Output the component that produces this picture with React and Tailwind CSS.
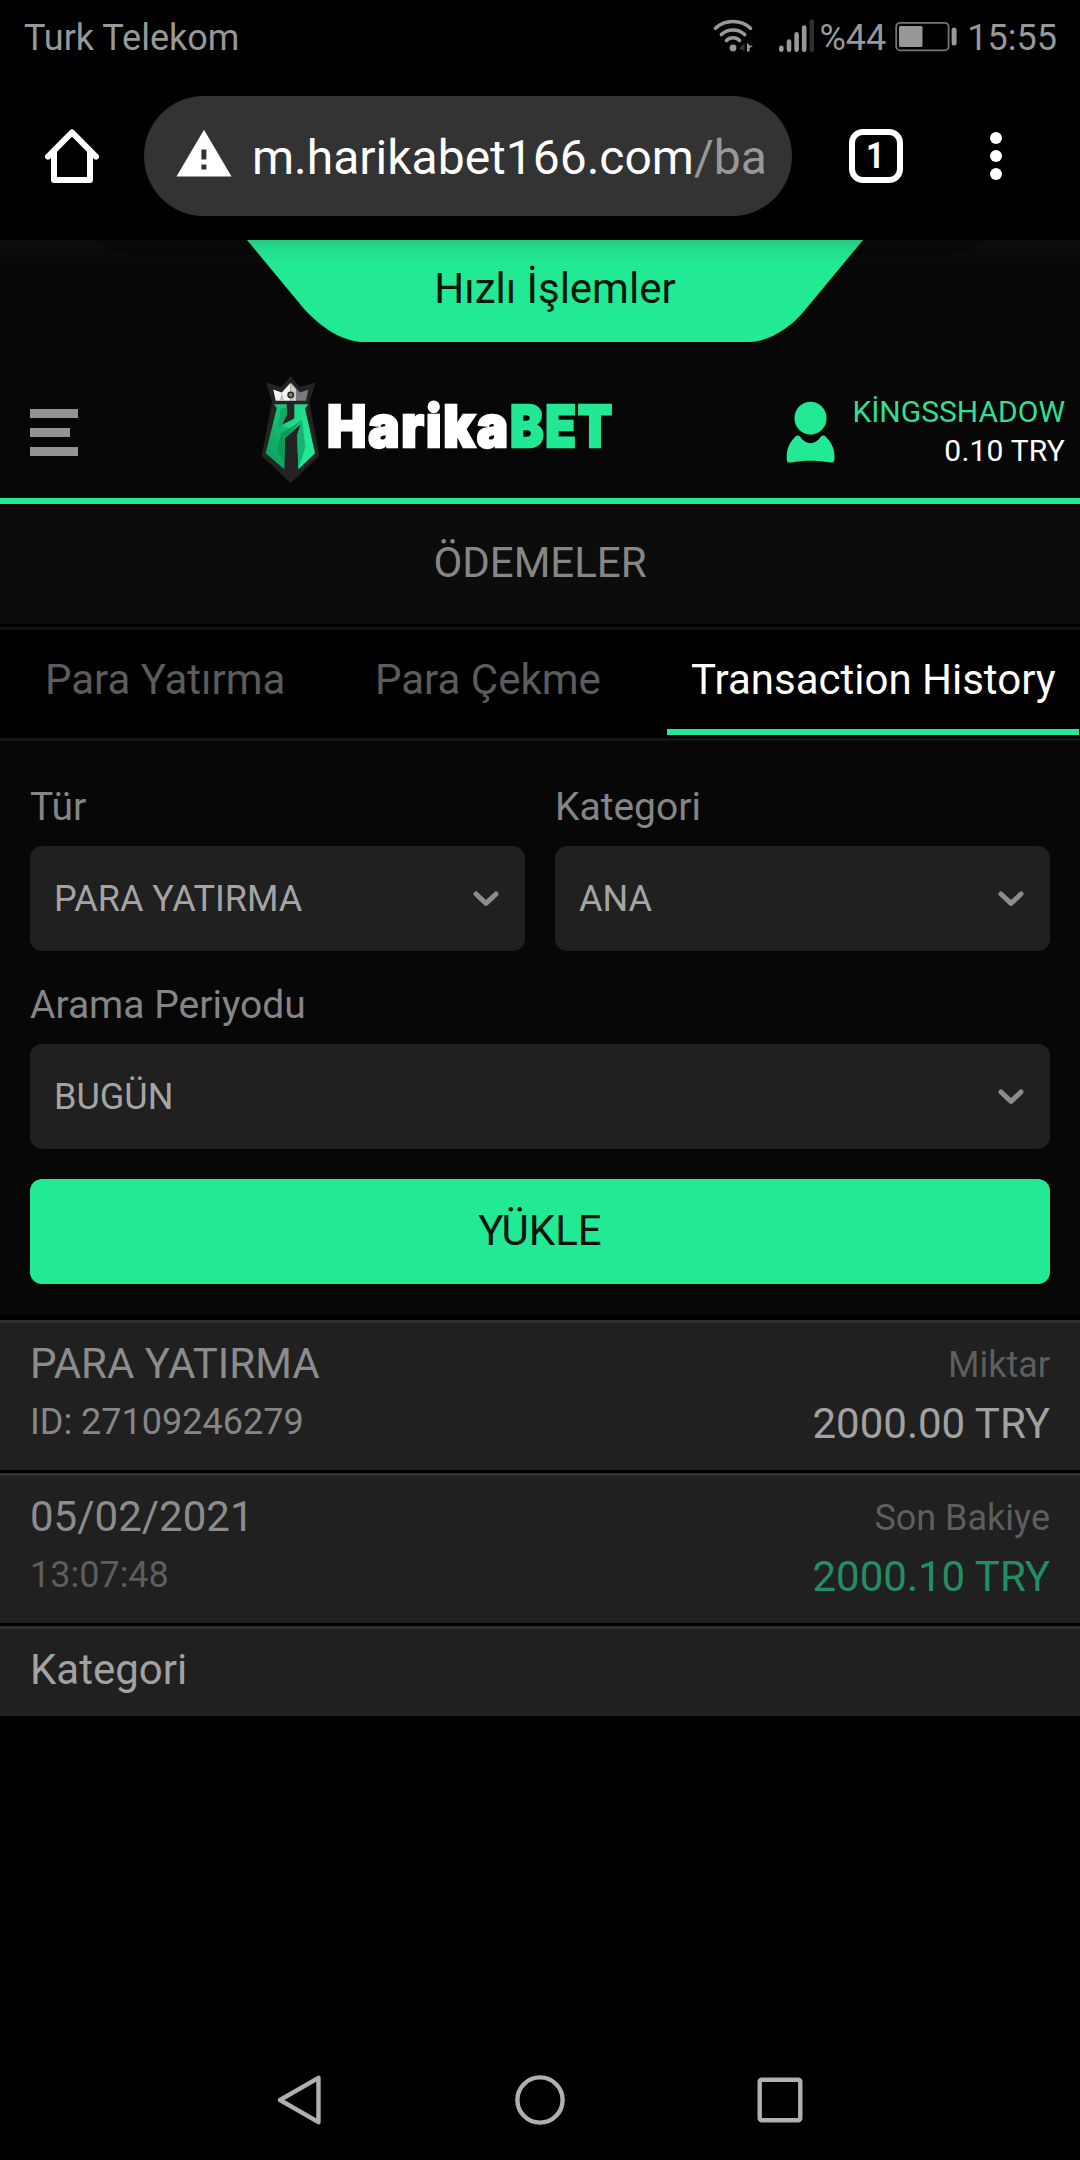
const selectChevron = (
  <svg className="h-[16px] w-[26px]" viewBox="0 0 26 16" fill="none" stroke="#8c8c8c" strokeWidth="5" strokeLinecap="round" strokeLinejoin="round">
    <path d="M3 3 L13 12.4 L23 3" />
  </svg>
);

function StatusBar() {
  return (
    <div className="flex h-[72px] items-start justify-between pl-[24px] pr-[23px] text-[36px] leading-[42px] text-[#989898]">
      <span className="mt-[17px] whitespace-nowrap">Turk Telekom</span>
      <div className="mt-[17px] flex items-start">
        <svg className="h-[36px] w-[42px]" viewBox="0 0 42 36" fill="none" stroke="#989898" strokeWidth="3.6" strokeLinecap="round">
          <path d="M3.5 11.2 C13 2.2 29 2.2 38.5 11.2" />
          <path d="M9.4 17.6 C15.5 11.4 26.5 11.4 32.6 17.6" />
          <path d="M14.5 23.4 C18 19.8 24 19.8 27.5 23.4" />
          <circle cx="21" cy="31" r="3.4" fill="#989898" stroke="none" />
          <path d="M32.5 26 L27 31.500 L32.500 34Z" fill="#333" stroke="none" />
          <path d="M35 25.5 V35 L37.6 34 V31 L41 29 L37.6 28.5Z" fill="#989898" stroke="none" />
        </svg>
        <svg className="ml-[24px] h-[36px] w-[38px]" viewBox="0 0 38 36" strokeWidth="4.6" strokeLinecap="round" fill="none" stroke="#989898">
          <path d="M3.3 30.8 V32.8 M11 24.6 V32.8 M18.6 17.4 V32.8 M26.2 10.6 V32.8" />
          <path d="M33.8 4.6 V32.8" stroke="#2e2e2e" />
        </svg>
        <span className="ml-[4px] whitespace-nowrap">%44</span>
        <svg className="ml-[9px] h-[36px] w-[62px]" viewBox="0 0 62 36" fill="none">
          <rect x="1.2" y="5.8" width="52.4" height="27.6" rx="4" stroke="#767676" strokeWidth="1.8" />
          <rect x="4" y="9" width="23.5" height="21" rx="1.5" fill="#989898" />
          <rect x="56.6" y="10.500" width="5" height="18" rx="2.5" fill="#989898" />
        </svg>
        <span className="ml-[10px] whitespace-nowrap">15:55</span>
      </div>
    </div>
  );
}

function BrowserBar() {
  return (
    <div className="flex h-[168px] items-center pl-[42px]">
      <svg className="h-[60px] w-[60px]" viewBox="0 0 60 60" fill="none" stroke="#fff" strokeWidth="6" strokeLinecap="round" strokeLinejoin="round">
        <path d="M6 30.6 L30 6.4 L54 30.6" />
        <path d="M12 26 V54 H48 V26" />
      </svg>
      <div className="ml-[42px] flex h-[120px] w-[648px] items-center rounded-full bg-[#333333] pl-[32px]">
        <svg className="mb-[6px] h-[48px] w-[56px] shrink-0" viewBox="0 0 56 48">
          <path d="M28 0.8 L55.5 47.5 H0.5Z" fill="#fff" />
          <path d="M25.4 20.5 h5 v10 h-5z M25.4 35.5 h5 v5 h-5z" fill="#333" />
        </svg>
        <span className="mt-[3px] ml-[20px] whitespace-nowrap text-[48px] leading-[56px] text-white">
          m.harikabet166.com<span className="text-[#989898]">/ba</span>
        </span>
      </div>
      <div className="ml-[57px] flex h-[54px] w-[54px] items-center justify-center rounded-[14px] border-[6px] border-white pr-[1px] text-[36px] leading-[40px] font-bold text-white">
        <span className="scale-x-90">1</span>
      </div>
      <svg className="ml-[81px] h-[54px] w-[24px]" viewBox="0 0 24 54" fill="#fff">
        <circle cx="12" cy="9" r="6" />
        <circle cx="12" cy="27" r="6" />
        <circle cx="12" cy="45" r="6" />
      </svg>
    </div>
  );
}

function QuickActions() {
  return (
    <div className="relative flex h-[102px] justify-center">
      <svg className="absolute inset-0 h-[102px] w-[1080px]" viewBox="0 0 1080 102">
        <defs>
          <linearGradient id="topShade" x1="0" y1="0" x2="0" y2="1">
            <stop offset="0" stopColor="#222" stopOpacity="0.24" />
            <stop offset="1" stopColor="#222" stopOpacity="0" />
          </linearGradient>
          <linearGradient id="tabFill" x1="0" y1="0" x2="0" y2="1">
            <stop offset="0" stopColor="#24cb83" />
            <stop offset="0.1" stopColor="#23de8d" />
            <stop offset="0.25" stopColor="#22e994" />
          </linearGradient>
        </defs>
        <path d="M95 0 C110 10 125 15 145 15 H935 C955 15 970 10 985 0Z" fill="#020202" />
        <rect width="1080" height="28" fill="url(#topShade)" />
        <path d="M247 0 H863 L805 70 C790 88 770 101 750 102 H362 C342 101 322 88 305 70Z" fill="url(#tabFill)" />
      </svg>
      <span className="relative mt-[24px] ml-[30px] text-[42px] leading-[50px] text-[#04150c]">Hızlı İşlemler</span>
    </div>
  );
}

function Logo() {
  return (
    <svg className="h-[108px] w-[360px] overflow-visible" viewBox="260 376 360 108">
      <defs>
        <linearGradient id="leftStem" x1="1" y1="0" x2="0.2" y2="1">
          <stop offset="0" stopColor="#20d588" />
          <stop offset="1" stopColor="#0ba05c" />
        </linearGradient>
        <linearGradient id="rightStem" x1="0" y1="0" x2="1" y2="1">
          <stop offset="0" stopColor="#1cc97e" />
          <stop offset="0.6" stopColor="#22e893" />
        </linearGradient>
      </defs>
      <path d="M290.700 376 L299.500 387 L315.700 382.500 L309.500 402 L319.300 456 L290.700 483 L261.700 456 L272 402 L266 382.500 L281.500 387Z" fill="#232323" />
      <path d="M273.300 389.500 L281.700 392.500 L290.700 382.700 V400.700 H275.700Z" fill="#f2f2f2" />
      <path d="M290.700 382.700 L300 392.500 L308.300 389.500 L306 400.700 H290.700Z" fill="#7a7a7a" />
      <path d="M290.700 382.700 L296 389 V400.700 H290.700Z" fill="#c9c9c9" />
      <path d="M281.700 392.500 L284 400.700 H280Z" fill="#bcbcbc" />
      <circle cx="290.700" cy="394.900" r="2.700" fill="#6f9442" stroke="#252525" strokeWidth="1.500" />
      <path d="M274 404.300 H286.700 V415 L281.700 425 L294.500 419.500 L304 411 L301 424 L285 438 L284.300 469.300 L265.700 453.300 L276.700 408.300Z" fill="url(#leftStem)" />
      <path d="M294.300 404.300 H308.300 L305 408.300 L315 453.300 L298.300 469.300 L297.300 435 L302 420 L290 428 L281.700 425 L294.300 418.500Z" fill="url(#rightStem)" />
      <path d="M281 408 H286.700 V415 L281.700 425 L278 429Z" fill="#0fab65" />
      <path d="M302 420 L285 438 L284.300 462 L277 452 L281 433 L290 428Z" fill="#0b9653" opacity="0.8" />
      <path d="M302 420 L305.500 447 L298.300 469.300 L297.300 435Z" fill="#15b571" />
      <text x="327" y="446.500" fontFamily="Inter, sans-serif" fontWeight="900" fontSize="58" letterSpacing="2" fill="#fff" stroke="#fff" strokeWidth="2.400" textLength="183" lengthAdjust="spacingAndGlyphs">Harika</text>
      <text x="510" y="446.500" fontFamily="Inter, sans-serif" fontWeight="900" fontSize="58" letterSpacing="2" fill="#22e893" stroke="#22e893" strokeWidth="2.400" textLength="104" lengthAdjust="spacingAndGlyphs">BET</text>
    </svg>
  );
}

function Header() {
  return (
    <header className="flex h-[162px] items-start border-b-[6px] border-[#22e994]">
      <div className="mt-[67px] ml-[30px] flex w-[48px] flex-col gap-[10px]">
        <span className="h-[9px] w-[48px] bg-[#939393]" />
        <span className="h-[9px] w-[40px] bg-[#939393]" />
        <span className="h-[9px] w-[48px] bg-[#939393]" />
      </div>
      <div className="mt-[34px] ml-[182px]">
        <Logo />
      </div>
      <svg className="mt-[58px] ml-[166px] h-[64px] w-[50px]" viewBox="0 0 50 64" fill="#22e994">
        <ellipse cx="24.500" cy="18.200" rx="16" ry="16.500" />
        <path d="M9 37 Q11.500 34.500 14 36.500 C20 45.500 29 45.500 35 36.500 Q37.500 34.500 40 37 C47 44 49 51 48.500 60 Q48 63 44.500 62.500 C30 60 19 60 4.500 62.500 Q1 63 0.800 60 C0.300 51 2 44 9 37Z" />
      </svg>
      <div className="mt-[52px] mr-[15px] ml-auto flex flex-col items-end gap-[3px] text-[30px] leading-[36px]">
        <span className="text-[#33dd94]">KİNGSSHADOW</span>
        <span className="tracking-[0.2px] text-white">0.10 TRY</span>
      </div>
    </header>
  );
}

function Tabs() {
  return (
    <nav className="flex h-[111px] border-b-[3px] border-[#151515] bg-black text-[42px] leading-[50px] text-[#5c5c5c]">
      <span className="w-[329px] pt-[25px] pl-[45px] whitespace-nowrap">Para Yatırma</span>
      <span className="w-[338px] pt-[25px] pl-[46px] whitespace-nowrap">Para Çekme</span>
      <span className="mb-[3px] w-[412px] border-b-[6px] border-[#22e994] pt-[25px] pl-[24px] whitespace-nowrap text-white">Transaction History</span>
    </nav>
  );
}

function Field({ label, value }) {
  return (
    <div className="flex flex-1 flex-col gap-[16px]">
      <span className="text-[39px] leading-[46px] text-[#858585]">{label}</span>
      <div className="flex h-[105px] items-center justify-between rounded-[12px] bg-[#202020] pr-[26px] pl-[24px] text-[36px] leading-[42px] text-[#a4a4a4]">
        <span>{value}</span>
        {selectChevron}
      </div>
    </div>
  );
}

function Filters() {
  return (
    <section className="flex h-[573px] flex-col px-[30px] pt-[43px]">
      <div className="flex gap-[30px]">
        <Field label="Tür" value="PARA YATIRMA" />
        <Field label="Kategori" value="ANA" />
      </div>
      <div className="mt-[31px] flex">
        <Field label="Arama Periyodu" value="BUGÜN" />
      </div>
      <button className="mt-[30px] h-[105px] rounded-[12px] bg-[#22e994] pb-[2px] text-[42px] leading-[50px] text-[#04150c]">YÜKLE</button>
    </section>
  );
}

function Row({ title, detail, detailClass, label, amount, amountClass }) {
  return (
    <div className="flex h-[150px] justify-between border-t-[3px] border-[#2f2f2f] bg-[#202020] px-[30px]">
      <div className="flex flex-col gap-[12px] pt-[16px]">
        <span className="text-[42px] leading-[50px] text-[#8c8c8c]">{title}</span>
        <span className={"text-[36px] leading-[42px] " + detailClass}>{detail}</span>
      </div>
      <div className="flex flex-col items-end gap-[13px] pt-[21px]">
        <span className="text-[36px] leading-[42px] text-[#5e5e5e]">{label}</span>
        <span className={"text-[42px] leading-[50px] " + amountClass}>{amount}</span>
      </div>
    </div>
  );
}

function NavBar() {
  return (
    <div className="flex h-[120px] items-center justify-center gap-[190px]">
      <svg className="h-[50px] w-[50px]" viewBox="0 0 50 50" fill="none" stroke="#b0b0b0" strokeWidth="4.400" strokeLinejoin="round">
        <path d="M5 25 L43.500 2.800 V47.200Z" />
      </svg>
      <svg className="h-[50px] w-[50px]" viewBox="0 0 50 50" fill="none" stroke="#b0b0b0" strokeWidth="4.400">
        <circle cx="25" cy="25" r="22.600" />
      </svg>
      <svg className="h-[50px] w-[50px]" viewBox="0 0 50 50" fill="none" stroke="#b0b0b0" strokeWidth="4.400">
        <rect x="4.700" y="4.700" width="40.600" height="40.600" rx="2" />
      </svg>
    </div>
  );
}

export default function App() {
  return (
    <div className="flex h-[2160px] w-[1080px] flex-col overflow-hidden bg-black font-['Roboto',sans-serif]">
      <StatusBar />
      <BrowserBar />
      <main className="flex flex-col bg-[#070707]">
        <QuickActions />
        <Header />
        <div className="mt-[3px] h-[117px] bg-[#0c0c0c] pt-[31px] text-center text-[42px] leading-[50px] text-[#868686]">ÖDEMELER</div>
        <div className="h-[6px] border-t-[3px] border-black bg-[#111111]" />
        <Tabs />
        <Filters />
        <div className="flex flex-col gap-[3px] bg-black pt-[6px]">
          <Row title="PARA YATIRMA" detail="ID: 27109246279" detailClass="text-[#868686]" label="Miktar" amount="2000.00 TRY" amountClass="text-[#a2a2a2]" />
          <Row title="05/02/2021" detail="13:07:48" detailClass="text-[#5e5e5e]" label="Son Bakiye" amount="2000.10 TRY" amountClass="text-[#218f64]" />
          <div className="h-[90px] border-t-[3px] border-[#2f2f2f] bg-[#202020] px-[30px] pt-[16px] text-[42px] leading-[50px] text-[#a2a2a2]">Kategori</div>
        </div>
      </main>
      <div className="flex-1" />
      <NavBar />
    </div>
  );
}
